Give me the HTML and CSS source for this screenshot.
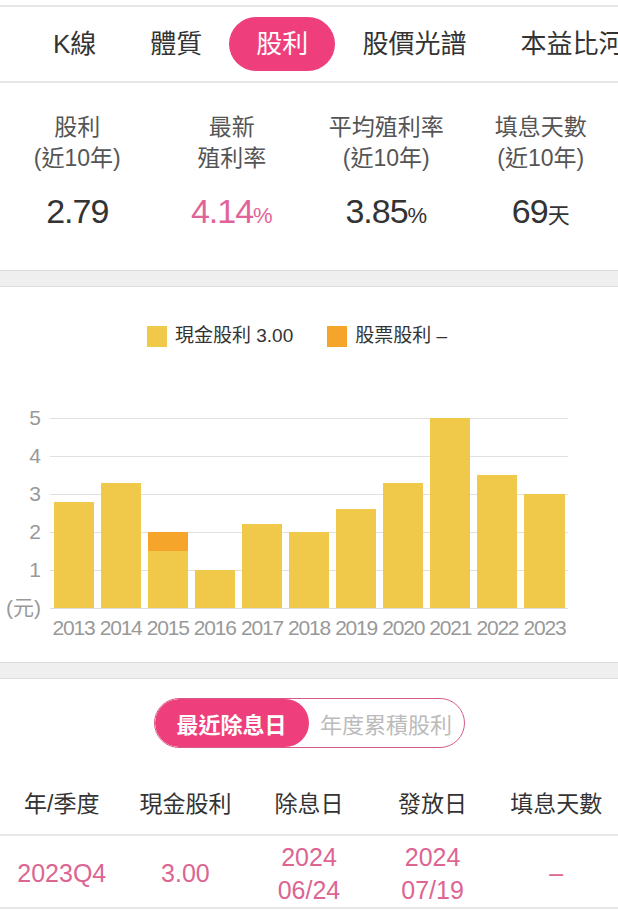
FILE: index.html
```html
<!DOCTYPE html>
<html lang="zh-Hant">
<head>
    <meta charset="UTF-8">
    <meta name="viewport" content="width=device-width, initial-scale=1.0">
    <title>股利</title>
    <link rel="stylesheet" href="styles.css">
</head>
<body>

<nav class="tabs">
    <a class="tab">K線</a>
    <a class="tab">體質</a>
    <a class="tab active">股利</a>
    <a class="tab">股價光譜</a>
    <a class="tab">本益比河流圖</a>
</nav>

<section class="stats">
    <div class="stat">
        <div class="stat-label">股利<br>(近10年)</div>
        <div class="stat-value">2.79</div>
    </div>
    <div class="stat">
        <div class="stat-label">最新<br>殖利率</div>
        <div class="stat-value pink">4.14<small>%</small></div>
    </div>
    <div class="stat">
        <div class="stat-label">平均殖利率<br>(近10年)</div>
        <div class="stat-value">3.85<small>%</small></div>
    </div>
    <div class="stat">
        <div class="stat-label">填息天數<br>(近10年)</div>
        <div class="stat-value">69<small>天</small></div>
    </div>
</section>

<div class="divider"></div>

<section class="chart">
    <div class="legend">
        <span class="legend-item"><i class="swatch cash"></i>現金股利 3.00</span>
        <span class="legend-item"><i class="swatch stock"></i>股票股利 –</span>
    </div>

    <div class="plot-row">
        <div class="y-axis">
            <span>5</span>
            <span>4</span>
            <span>3</span>
            <span>2</span>
            <span>1</span>
            <span>(元)</span>
        </div>
        <!-- 高度 = 股利 / 5 -->
        <div class="plot">
            <div class="slot"><div class="seg cash" style="height:56%"></div></div>
            <div class="slot"><div class="seg cash" style="height:66%"></div></div>
            <div class="slot"><div class="seg stock" style="height:10%"></div><div class="seg cash" style="height:30%"></div></div>
            <div class="slot"><div class="seg cash" style="height:20%"></div></div>
            <div class="slot"><div class="seg cash" style="height:44%"></div></div>
            <div class="slot"><div class="seg cash" style="height:40%"></div></div>
            <div class="slot"><div class="seg cash" style="height:52%"></div></div>
            <div class="slot"><div class="seg cash" style="height:66%"></div></div>
            <div class="slot"><div class="seg cash" style="height:100%"></div></div>
            <div class="slot"><div class="seg cash" style="height:70%"></div></div>
            <div class="slot"><div class="seg cash" style="height:60%"></div></div>
        </div>
    </div>

    <div class="x-axis">
        <span>2013</span>
        <span>2014</span>
        <span>2015</span>
        <span>2016</span>
        <span>2017</span>
        <span>2018</span>
        <span>2019</span>
        <span>2020</span>
        <span>2021</span>
        <span>2022</span>
        <span>2023</span>
    </div>
</section>

<div class="divider"></div>

<section class="records">
    <div class="switch">
        <span class="switch-item on">最近除息日</span>
        <span class="switch-item">年度累積股利</span>
    </div>

    <table class="dividend-table">
        <thead>
            <tr>
                <th>年/季度</th>
                <th>現金股利</th>
                <th>除息日</th>
                <th>發放日</th>
                <th>填息天數</th>
            </tr>
        </thead>
        <tbody>
            <tr>
                <td>2023Q4</td>
                <td>3.00</td>
                <td>2024<br>06/24</td>
                <td>2024<br>07/19</td>
                <td>–</td>
            </tr>
        </tbody>
    </table>
</section>

</body>
</html>
```

FILE: styles.css
```css
body {
    margin: 0;
    font-family: "Liberation Sans", "Noto Sans CJK TC", sans-serif;
    color: #333;
    background: #fff;
}
.tabs {
    display: flex;
    align-items: center;
    margin-top: 5px;
    height: 74px;
    padding-left: 26px;
    border-top: 2px solid #e6e6e6;
    border-bottom: 2px solid #e6e6e6;
    white-space: nowrap;
    overflow: hidden;
}
.tab {
    flex: none;
    padding: 0 27px;
    font-size: 26px;
    line-height: 54px;
    color: #333;
}
.tab.active {
    background: #ee3f7c;
    color: #fff;
    border-radius: 27px;
}
.stats {
    display: grid;
    grid-template-columns: repeat(4, 1fr);
    padding: 29px 0 39px;
    text-align: center;
}
.stat-label {
    font-size: 23px;
    line-height: 31px;
    color: #555;
}
.stat-value {
    height: 40px;
    margin-top: 17px;
    font-size: 34px;
    line-height: 40px;
    letter-spacing: -1px;
    color: #333;
}
.stat-value small {
    font-size: 22px;
    line-height: 1;
    letter-spacing: 0;
}
.pink {
    color: #e0649a;
}
.divider {
    height: 15px;
    background: #efefef;
    border-top: 1px solid #dcdcdc;
    border-bottom: 1px solid #dcdcdc;
}
.chart {
    padding: 37px 0 22px;
}
.legend {
    display: flex;
    justify-content: center;
    gap: 34px;
    font-size: 19px;
    line-height: 24px;
    color: #333;
    padding-right: 24px;
}
.legend-item {
    display: flex;
    align-items: center;
}
.swatch {
    width: 20px;
    height: 21px;
    margin-right: 8px;
}
.cash {
    background: #f0c94a;
}
.stock {
    background: #f5a52a;
}
.plot-row {
    display: flex;
    margin-top: 70px;
}
.y-axis {
    width: 41px;
    padding-right: 9px;
    height: 190px;
    display: flex;
    flex-direction: column;
    justify-content: space-between;
    align-items: flex-end;
    font-size: 21px;
    color: #999;
}
.y-axis span {
    height: 0;
    line-height: 0;
}
.plot {
    width: 518px;
    height: 190px;
    display: flex;
    border-bottom: 1px solid #ddd;
    background-image: linear-gradient(to bottom, #e0e0e0 1px, transparent 1px);
    background-size: 100% 20%;
}
.slot {
    flex: 1;
    padding: 0 3.5px;
    display: flex;
    flex-direction: column;
    justify-content: flex-end;
}
.x-axis {
    display: flex;
    margin: 7px 0 0 50px;
    width: 518px;
    font-size: 21px;
    line-height: 24px;
    letter-spacing: -1.2px;
    color: #999;
}
.x-axis span {
    flex: 1;
    text-align: center;
}
.records {
    padding-top: 19px;
}
.switch {
    display: flex;
    width: 309px;
    height: 48px;
    margin: 0 auto;
    border: 1.5px solid #d65a88;
    border-radius: 26px;
    overflow: hidden;
}
.switch-item {
    flex: 1;
    display: flex;
    align-items: center;
    justify-content: center;
    font-size: 22px;
    color: #bbb;
}
.switch-item.on {
    flex: none;
    width: 154px;
    background: #ee3f7c;
    color: #fff;
    font-weight: bold;
    border-radius: 26px;
}
.dividend-table {
    width: 100%;
    margin-top: 22px;
    border-collapse: collapse;
    table-layout: fixed;
    text-align: center;
}
.dividend-table th {
    height: 64px;
    padding: 0;
    font-size: 23px;
    font-weight: normal;
    color: #333;
    border-bottom: 2px solid #e8e8e8;
}
.dividend-table td {
    height: 67px;
    padding: 4px 0 0;
    font-size: 25px;
    line-height: 33px;
    color: #dc6592;
    border-bottom: 2px solid #e8e8e8;
}
```
